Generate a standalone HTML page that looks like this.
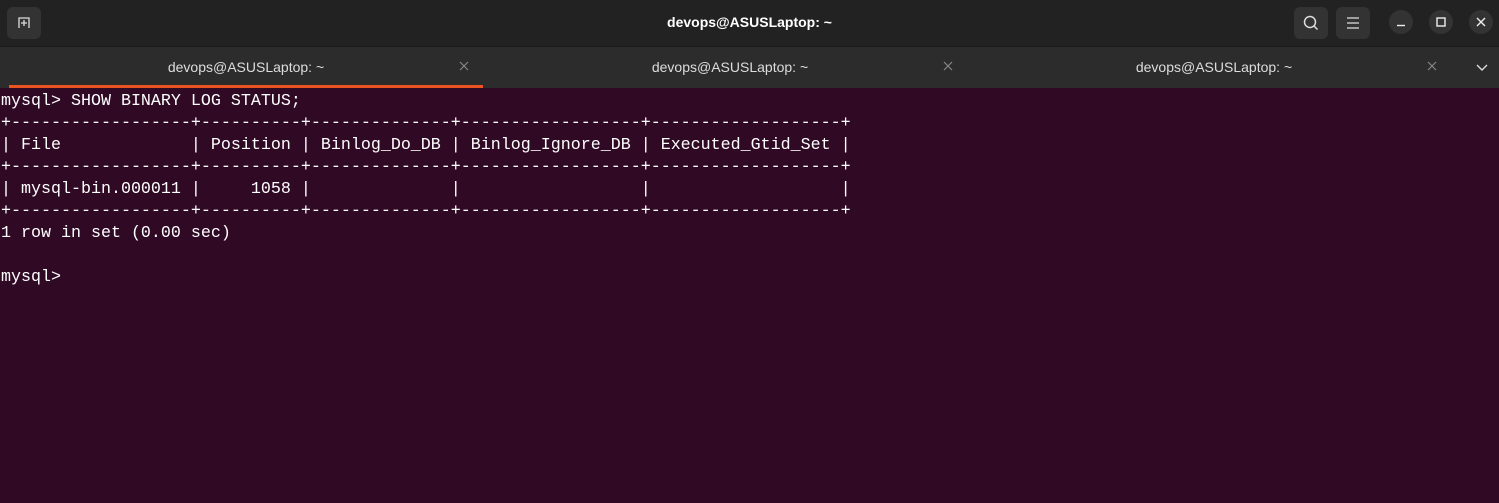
<!DOCTYPE html>
<html><head><meta charset="utf-8"><style>
html,body{margin:0;padding:0;width:1499px;height:503px;overflow:hidden;background:#300a24;font-family:"Liberation Sans",sans-serif}
.tb{position:absolute;left:0;top:0;width:1499px;height:46px;background:#222;border-bottom:1px solid #1a1a1a}
.title{position:absolute;left:0;width:1499px;top:14px;text-align:center;color:#fff;font-weight:bold;font-size:14px}
.btn{position:absolute;top:7px;width:34px;height:32px;background:#333;border-radius:6px}
.circ{position:absolute;top:10px;width:24px;height:24px;border-radius:50%;background:#333}
.tabs{position:absolute;left:0;top:47px;width:1499px;height:41px;background:#2c2c2c}
.tab{position:absolute;top:12px;color:#ddd;font-size:14px;width:484px;text-align:center}
.x{position:absolute;top:14px}
.ul{position:absolute;left:9px;top:38px;width:474px;height:3px;background:#e95420}
pre{position:absolute;left:1px;top:91px;margin:0;color:#fff;font-family:"Liberation Mono",monospace;font-size:16.67px;line-height:22px}
</style></head><body>
<div class="tb">
<div class="btn" style="left:7px"><svg width="34" height="32"><path d="M12 21V11h10v10M17 13v6M14 16h6" stroke="#ddd" stroke-width="1.3" fill="none"/></svg></div>
<div class="title">devops@ASUSLaptop: ~</div>
<div class="btn" style="left:1294px"><svg width="34" height="32"><circle cx="16" cy="15" r="5.5" stroke="#ddd" stroke-width="1.5" fill="none"/><path d="M20 19l3.5 3.5" stroke="#ddd" stroke-width="1.5"/></svg></div>
<div class="btn" style="left:1336px"><svg width="34" height="32"><path d="M11 11h12M11 16h12M11 21h12" stroke="#ddd" stroke-width="1.3"/></svg></div>
<div class="circ" style="left:1389px"><svg width="24" height="24"><path d="M8 15.5h8" stroke="#eee" stroke-width="1.4"/></svg></div>
<div class="circ" style="left:1429px"><svg width="24" height="24"><rect x="8" y="8" width="8" height="8" stroke="#eee" stroke-width="1.4" fill="none"/></svg></div>
<div class="circ" style="left:1469px"><svg width="24" height="24"><path d="M8 8l8 8M16 8l-8 8" stroke="#eee" stroke-width="1.4"/></svg></div>
</div>
<div class="tabs">
<div class="tab" style="left:4px">devops@ASUSLaptop: ~</div>
<svg class="x" style="left:459px" width="10" height="10"><path d="M1 1l8 8M9 1l-8 8" stroke="#888" stroke-width="1.2"/></svg>
<div class="tab" style="left:488px">devops@ASUSLaptop: ~</div>
<svg class="x" style="left:943px" width="10" height="10"><path d="M1 1l8 8M9 1l-8 8" stroke="#888" stroke-width="1.2"/></svg>
<div class="tab" style="left:972px">devops@ASUSLaptop: ~</div>
<svg class="x" style="left:1427px" width="10" height="10"><path d="M1 1l8 8M9 1l-8 8" stroke="#888" stroke-width="1.2"/></svg>
<svg style="position:absolute;left:1474px;top:14px" width="16" height="12"><path d="M3 4l5 5 5-5" stroke="#ddd" stroke-width="1.4" fill="none"/></svg>
<div class="ul"></div>
</div>
<pre>mysql&gt; SHOW BINARY LOG STATUS;
+------------------+----------+--------------+------------------+-------------------+
| File             | Position | Binlog_Do_DB | Binlog_Ignore_DB | Executed_Gtid_Set |
+------------------+----------+--------------+------------------+-------------------+
| mysql-bin.000011 |     1058 |              |                  |                   |
+------------------+----------+--------------+------------------+-------------------+
1 row in set (0.00 sec)

mysql&gt; </pre>
</body></html>
